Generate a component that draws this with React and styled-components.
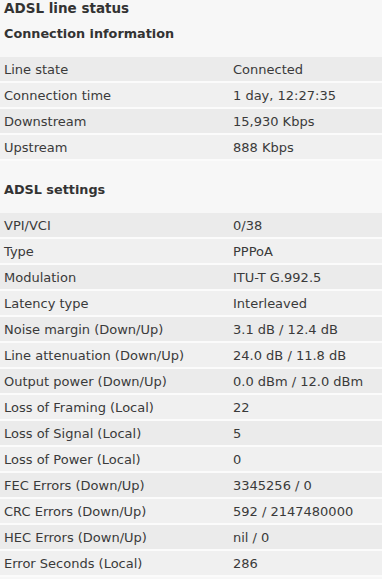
import React from 'react'
import styled, { createGlobalStyle } from 'styled-components'

const GlobalStyle = createGlobalStyle`
  html, body {
    margin: 0;
    padding: 0;
    background: #f7f7f7;
  }
  body {
    font-family: "DejaVu Sans", Verdana, sans-serif;
    color: #3a3a3a;
  }
`

const Page = styled.div`
  display: flex;
  flex-direction: column;
  width: 382px;
`

const Title = styled.h1`
  margin: 0 0 9px;
  padding-left: 4px;
  font-size: 13.5px;
  line-height: 16px;
  font-weight: bold;
  color: #333;
`

const Heading = styled.h2`
  margin: ${p => (p.first ? '0' : '20px')} 0 15px;
  padding-left: 4px;
  font-size: 12.8px;
  line-height: 17px;
  font-weight: bold;
  color: #333;
`

const Table = styled.div`
  display: flex;
  flex-direction: column;
`

// 26px pitch: 2px top pad + 22px text + 2px light separator
const Row = styled.div`
  display: grid;
  grid-template-columns: 229px 1fr;
  align-items: center;
  box-sizing: border-box;
  height: 26px;
  padding-top: 2px;
  border-bottom: 2px solid #fbfbfb;
  background: ${p => (p.odd ? '#f0f0f0' : '#ebebeb')};
  font-size: 13px;
  line-height: 22px;
  white-space: nowrap;
`

const Label = styled.span`
  padding-left: 4px;
`

const Value = styled.span`
  padding-left: 4px;
`

const connection = [
  ['Line state', 'Connected'],
  ['Connection time', '1 day, 12:27:35'],
  ['Downstream', '15,930 Kbps'],
  ['Upstream', '888 Kbps'],
]

const settings = [
  ['VPI/VCI', '0/38'],
  ['Type', 'PPPoA'],
  ['Modulation', 'ITU-T G.992.5'],
  ['Latency type', 'Interleaved'],
  ['Noise margin (Down/Up)', '3.1 dB / 12.4 dB'],
  ['Line attenuation (Down/Up)', '24.0 dB / 11.8 dB'],
  ['Output power (Down/Up)', '0.0 dBm / 12.0 dBm'],
  ['Loss of Framing (Local)', '22'],
  ['Loss of Signal (Local)', '5'],
  ['Loss of Power (Local)', '0'],
  ['FEC Errors (Down/Up)', '3345256 / 0'],
  ['CRC Errors (Down/Up)', '592 / 2147480000'],
  ['HEC Errors (Down/Up)', 'nil / 0'],
  ['Error Seconds (Local)', '286'],
]

const StatusTable = ({ rows }) => (
  <Table>
    {rows.map(([label, value], i) => (
      <Row key={label} odd={i % 2 === 1}>
        <Label>{label}</Label>
        <Value>{value}</Value>
      </Row>
    ))}
  </Table>
)

const App = () => (
  <Page>
    <GlobalStyle />
    <Title>ADSL line status</Title>
    <Heading first>Connection information</Heading>
    <StatusTable rows={connection} />
    <Heading>ADSL settings</Heading>
    <StatusTable rows={settings} />
  </Page>
)

export default App
